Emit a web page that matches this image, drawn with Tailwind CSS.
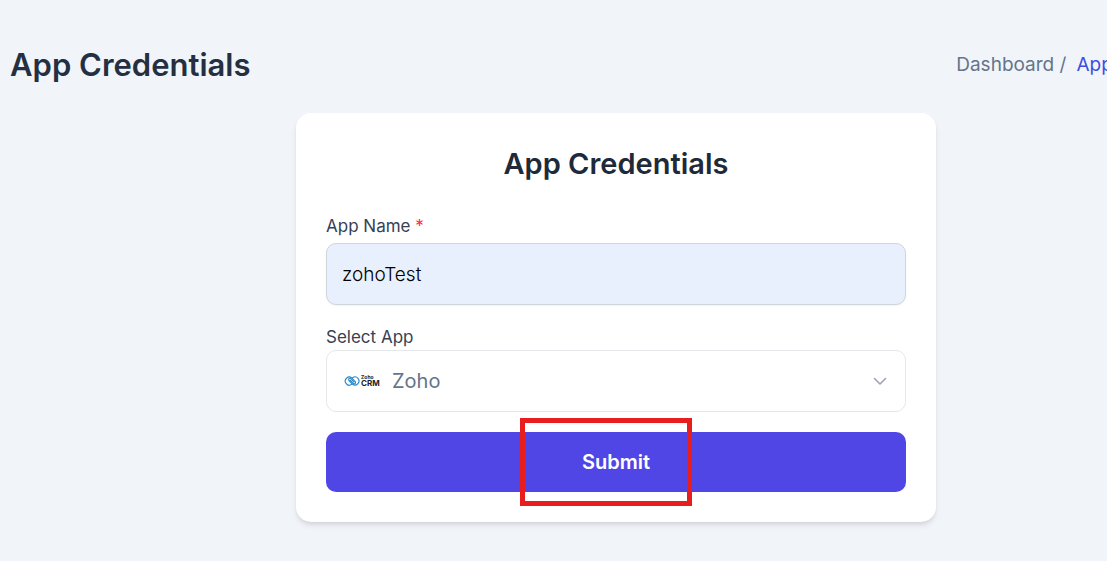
<!doctype html>
<html lang="en">
    <head>
        <meta charset="UTF-8" />
        <meta name="viewport" content="width=device-width, initial-scale=1.0" />
        <title>App Credentials</title>
        <script src="https://cdn.jsdelivr.net/npm/@tailwindcss/browser@4"></script>
    </head>
    <body class="min-h-screen overflow-hidden bg-[#f1f5f9] font-['Inter',sans-serif] text-[#1c2434]">
        <main class="-mr-[115px] pt-10 pl-[10px]">
            <header class="mb-6 flex items-center justify-between pr-[2px]">
                <h1 class="text-[31px] leading-[49px] font-semibold text-[#243042]">App Credentials</h1>
                <nav aria-label="Breadcrumb">
                    <ol class="flex gap-[10px] text-[19px] leading-8 whitespace-nowrap">
                        <li><a href="#" class="text-[#64748b]">Dashboard /</a></li>
                        <li class="text-[#3c50e0]">App Credentials</li>
                    </ol>
                </nav>
            </header>
            <form class="mx-auto w-full max-w-[640px] rounded-[15px] bg-white p-[30px] shadow-md">
                <h2 class="mb-7 text-center text-[29px] leading-[42px] font-semibold text-gray-800">App Credentials</h2>
                <div class="mb-5">
                    <label for="app-name" class="block pb-1 text-[17px] leading-[26px] text-gray-700"
                        >App Name <span class="text-red-500">*</span></label
                    >
                    <input
                        type="text"
                        id="app-name"
                        name="app-name"
                        value="zohoTest"
                        required
                        class="block h-[62px] w-full rounded-[10px] border border-gray-300 bg-[#e8f0fe] px-[15px] text-[19px] font-light text-black shadow-xs focus:outline-none" />
                </div>
                <div class="mb-5">
                    <label for="app" class="block text-[17px] leading-[25px] text-gray-700">Select App</label>
                    <div class="relative">
                        <select
                            id="app"
                            name="app"
                            class="block h-[62px] w-full appearance-none rounded-[10px] border border-gray-200 bg-white pr-10 pl-[65px] text-[20px] text-[#64748b] focus:outline-none">
                            <option>Zoho</option>
                        </select>
                        <svg
                            class="pointer-events-none absolute top-[23px] left-[18px] h-4 w-9"
                            viewBox="0 0 36 16"
                            fill="none"
                            aria-hidden="true">
                            <g stroke="#2386c8" stroke-width="1.1" stroke-linecap="round">
                                <path d="M7.6 11.4A4 4 0 1 1 8 5.2L11.2 8.6A1.3 1.3 0 0 1 9.3 10.4L6.2 7.2" />
                                <path d="M8.6 4.7A4 4 0 1 1 8.3 11L5 7.5A1.3 1.3 0 0 1 6.9 5.7L10 8.9" />
                            </g>
                            <text x="17" y="6" class="fill-[#222] text-[5px] font-bold">Zoho</text>
                            <text x="17" y="13" class="fill-[#222] text-[8px] font-bold">CRM</text>
                        </svg>
                        <svg
                            class="pointer-events-none absolute top-[21px] right-4 size-5"
                            viewBox="0 0 20 20"
                            fill="none"
                            stroke="#9ca3af"
                            stroke-width="1.6"
                            stroke-linecap="round"
                            stroke-linejoin="round"
                            aria-hidden="true">
                            <path d="m4.5 7.5 5.5 5.5 5.5-5.5" />
                        </svg>
                    </div>
                </div>
                <div class="relative">
                    <button
                        type="submit"
                        class="block h-[60px] w-full cursor-pointer rounded-[10px] bg-[#4f46e5] text-[20px] font-semibold text-white">
                        Submit
                    </button>
                    <div
                        class="pointer-events-none absolute -top-[14px] left-[194px] h-[88px] w-[172px] border-[5px] border-[#e81e1e]"></div>
                </div>
            </form>
        </main>
    </body>
</html>
